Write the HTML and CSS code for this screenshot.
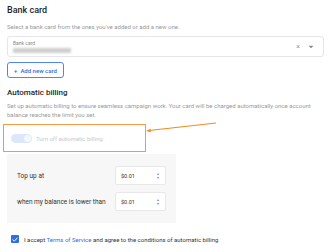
FILE: index.html
```html
<!DOCTYPE html>
<html lang="en">
  <head>
    <meta charset="UTF-8" />
    <title>Billing</title>
    <link rel="stylesheet" href="styles.css">
  </head>
  <body>
    <div class="page">
      <h2 class="title">Bank card</h2>
      <p class="hint">Select a bank card from the ones you've added or add a new one.</p>

      <!-- Card select -->
      <div class="select">
        <div class="select-body">
          <span class="select-label">Bank card</span>
          <span class="select-value"></span>
        </div>
        <span class="select-clear">×</span>
        <svg class="select-caret" width="6" height="4" viewBox="0 0 6 4"><path d="M0.5 0.8h5L3 3.2z" fill="#888"/></svg>
      </div>

      <button class="add-btn">+&nbsp; Add new card</button>

      <h2 class="title title-billing">Automatic billing</h2>
      <p class="hint">Set up automatic billing to ensure seamless campaign work. Your card will be charged automatically once account balance reaches the limit you set.</p>

      <!-- Toggle with annotation -->
      <div class="toggle-row">
        <span class="toggle"><span class="knob"></span></span>
        <span class="toggle-text">Turn off automatic billing</span>
        <div class="highlight"></div>
        <svg class="pointer" width="72" height="12" viewBox="0 0 72 12">
          <line x1="3" y1="8.5" x2="70" y2="1" stroke="#f28a1e" stroke-width="1.1"/>
          <path d="M0 9 L4.5 6.8 L4.9 10.3 z" fill="#f28a1e"/>
        </svg>
      </div>

      <!-- Limits -->
      <div class="limits">
        <div class="limit-row">
          <span>Top up at</span>
          <div class="num-input">$0.01<span class="spin">▴<br>▾</span></div>
        </div>
        <div class="limit-row">
          <span>when my balance is lower than</span>
          <div class="num-input">$0.01<span class="spin">▴<br>▾</span></div>
        </div>
      </div>

      <label class="accept">
        <span class="check">
          <svg width="6" height="5" viewBox="0 0 6 5"><path d="M0.6 2.5l1.7 1.6L5.4 0.8" stroke="#fff" stroke-width="1" fill="none"/></svg>
        </span>
        <span>I accept <a href="#">Terms of Service</a> and agree to the conditions of automatic billing</span>
      </label>
    </div>
  </body>
</html>
```

FILE: styles.css
```css
* {
  box-sizing: border-box;
  margin: 0;
  padding: 0;
}
body {
  background: #fff;
  font-family: Roboto, "Liberation Sans", sans-serif;
  color: #222;
}
.page {
  padding: 5px 7px 0 7px;
  width: 330px;
}
.title {
  font-size: 9px;
  font-weight: 500;
  line-height: 11px;
  color: #1f1f1f;
}
.hint {
  margin-top: 6px;
  font-size: 6px;
  line-height: 9px;
  color: #9a9a9a;
}
.select {
  margin-top: 5px;
  height: 21px;
  width: 317px;
  border: 1px solid #e6e6e6;
  border-radius: 3px;
  display: flex;
  align-items: center;
  padding: 0 9px 0 5px;
}
.select-body {
  flex: 1;
  display: flex;
  flex-direction: column;
  gap: 2px;
}
.select-label {
  font-size: 5px;
  line-height: 6px;
  color: #8a8a8a;
}
.select-value {
  width: 58px;
  height: 5px;
  background: #cfcfcf;
  filter: blur(0.8px);
}
.select-clear {
  font-size: 7px;
  color: #999;
  margin-right: 8px;
}
.select-caret {
  display: block;
}
.add-btn {
  margin-top: 5px;
  height: 16px;
  width: 57px;
  border: 1px solid #4f86ec;
  border-radius: 3px;
  background: #fff;
  color: #2f6fe4;
  font-family: Roboto, "Liberation Sans", sans-serif;
  font-size: 6px;
  font-weight: 500;
}
.title-billing {
  margin-top: 9px;
  font-size: 8px;
}
.title-billing + .hint {
  margin-top: 3px;
}
.toggle-row {
  position: relative;
  margin-top: 13px;
  height: 12px;
  display: flex;
  align-items: center;
  gap: 4px;
  padding-left: 4px;
}
.toggle {
  width: 21px;
  height: 9px;
  border-radius: 5px;
  background: #dce7fb;
  position: relative;
}
.knob {
  position: absolute;
  right: 1px;
  top: 1px;
  width: 7px;
  height: 7px;
  border-radius: 50%;
  background: #f4f7fe;
}
.toggle-text {
  font-size: 6px;
  color: #c9c9c9;
}
.highlight {
  position: absolute;
  left: -4px;
  top: -8px;
  width: 143px;
  height: 28px;
  border: 1px solid #f39a45;
}
.pointer {
  position: absolute;
  left: 139px;
  top: -10px;
}
.limits {
  margin-top: 10px;
  width: 169px;
  background: #f7f7f7;
  padding: 12px 10px 12px 10px;
  display: flex;
  flex-direction: column;
  gap: 7px;
}
.limit-row {
  display: flex;
  align-items: center;
  justify-content: space-between;
  font-size: 6.5px;
  color: #333;
}
.num-input {
  width: 51px;
  height: 19px;
  background: #fff;
  border: 1px solid #e8e8e8;
  border-radius: 2px;
  display: flex;
  align-items: center;
  justify-content: space-between;
  padding: 0 6px 0 5px;
  font-size: 5.5px;
  color: #333;
}
.spin {
  font-size: 4px;
  line-height: 4px;
  color: #888;
  text-align: center;
}
.accept {
  margin-top: 12px;
  display: flex;
  align-items: center;
  gap: 5px;
  padding-left: 4px;
  font-size: 6px;
  color: #333;
}
.check {
  width: 8px;
  height: 8px;
  border-radius: 1px;
  background: #2f6fe4;
  display: flex;
  align-items: center;
  justify-content: center;
}
.accept a {
  color: #2f6fe4;
  text-decoration: underline;
}
```
